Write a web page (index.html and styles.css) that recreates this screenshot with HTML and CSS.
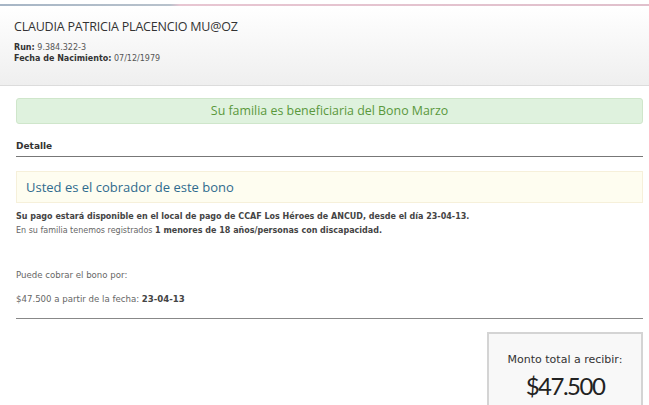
FILE: index.html
```html
<!DOCTYPE html>
<html lang="es">
<head>
    <meta charset="UTF-8">
    <meta name="viewport" content="width=device-width, initial-scale=1.0">
    <title>Bono Marzo</title>
    <link rel="stylesheet" href="styles.css">
</head>
<body>
    <div class="top-line"></div>

    <header class="persona">
        <h1>CLAUDIA PATRICIA PLACENCIO MU@OZ</h1>
        <p><b>Run:</b> 9.384.322-3</p>
        <p><b>Fecha de Nacimiento:</b> 07/12/1979</p>
    </header>

    <div class="contenido">
        <div class="alerta-ok">Su familia es beneficiaria del Bono Marzo</div>

        <h2 class="detalle">Detalle</h2>

        <div class="alerta-info">Usted es el cobrador de este bono</div>

        <p class="pago"><b>Su pago estará disponible en el local de pago de CCAF Los Héroes de ANCUD, desde el día 23-04-13.</b></p>
        <p class="pago">En su familia tenemos registrados <b>1 menores de 18 años/personas con discapacidad.</b></p>

        <p class="cobro">Puede cobrar el bono por:</p>
        <p class="cobro">$47.500 a partir de la fecha: <b>23-04-13</b></p>

        <hr class="separador">

        <div class="total-fila">
            <div class="total">
                <p>Monto total a recibir:</p>
                <div class="monto">$47.500</div>
            </div>
        </div>
    </div>
</body>
</html>
```

FILE: styles.css
```css
body {
    margin: 0;
    padding: 0;
    background-color: #fff;
    color: #666;
    font-family: 'DejaVu Sans', Verdana, sans-serif;
    font-size: 8px;
}

.top-line {
    margin-top: 4px;
    height: 2px;
    background: linear-gradient(to right, #a7b6c6 0, #b8c2cc 170px, #e8c6d2 180px, #e0c0cc 100%);
}

.persona {
    height: 80px;
    box-sizing: border-box;
    padding: 12px 14px 0;
    background: linear-gradient(to bottom, #fff 0, #efefef 100%);
    border-bottom: 1px solid #dcdcdc;
}

.persona h1 {
    margin: 0 0 7px;
    font-family: 'Open Sans', sans-serif;
    font-weight: normal;
    font-size: 12.5px;
    color: #333;
    letter-spacing: -0.2px;
}

.persona p {
    margin: 0;
    line-height: 11px;
    color: #555;
}

.persona b {
    color: #333;
}

.contenido {
    margin: 0 6px 0 16px;
}

.alerta-ok {
    margin-top: 12px;
    height: 26px;
    line-height: 24px;
    box-sizing: border-box;
    text-align: center;
    background-color: #dff2de;
    border: 1px solid #cfe6cb;
    border-radius: 3px;
    color: #5a983c;
    font-family: 'Open Sans', sans-serif;
    font-size: 12.4px;
}

.detalle {
    margin: 17px 0 0;
    padding-bottom: 5px;
    border-bottom: 1px solid #777;
    font-size: 9px;
    font-weight: bold;
    color: #333;
}

.alerta-info {
    margin-top: 14px;
    height: 32px;
    line-height: 30px;
    box-sizing: border-box;
    padding-left: 9px;
    background-color: #fefdf0;
    border: 1px solid #f6f0da;
    color: #2f6b8e;
    font-family: 'Open Sans', sans-serif;
    font-size: 13px;
}

.pago {
    margin: 0;
    line-height: 14px;
}

.pago:first-of-type {
    margin-top: 7px;
}

.pago b,
.cobro b {
    color: #444;
}

.cobro {
    margin: 0;
    line-height: 24px;
    font-size: 8.6px;
}

.pago + .cobro {
    margin-top: 25px;
}

.separador {
    margin: 7px 0 0;
    border: 0;
    border-top: 1px solid #888;
}

.total-fila {
    display: flex;
    justify-content: flex-end;
    margin-top: 13px;
}

.total {
    width: 156px;
    height: 90px;
    box-sizing: border-box;
    border: 2px solid #d4d4d4;
    border-bottom: 0;
    background-color: #f8f8f8;
    text-align: center;
    color: #333;
}

.total p {
    margin: 19px 0 0;
    font-size: 11px;
}

.monto {
    margin-top: 5px;
    font-family: Lato, sans-serif;
    font-size: 24px;
    letter-spacing: -1.5px;
    color: #222;
}
```
